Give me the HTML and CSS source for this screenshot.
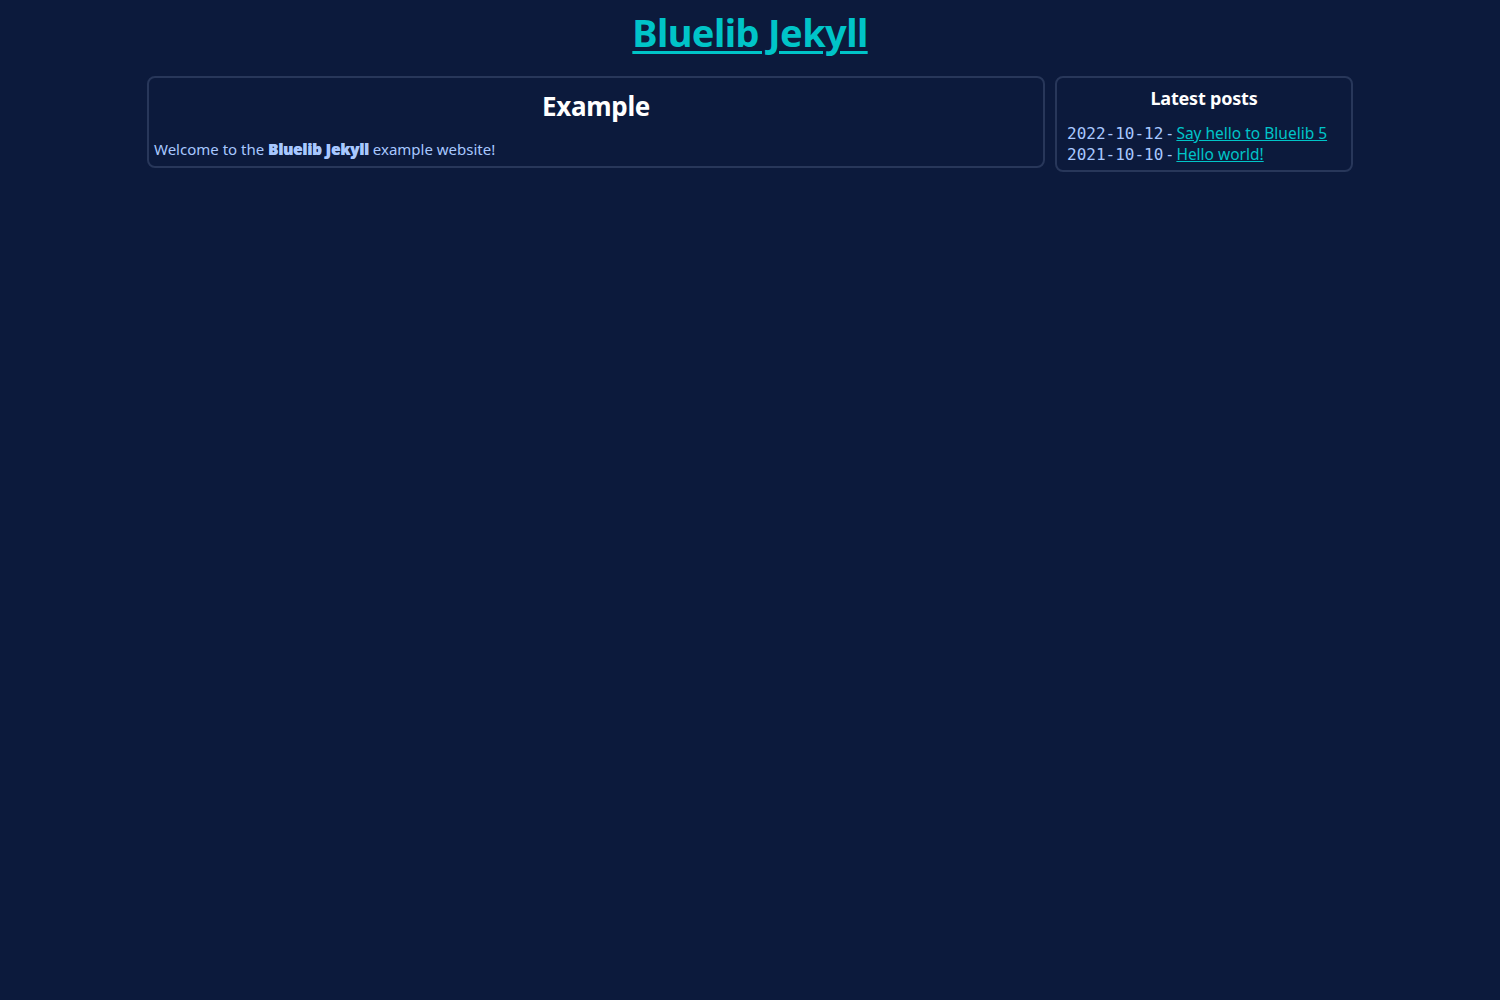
FILE: index.html
```html
<!DOCTYPE html>
<html>
<head>
<meta charset="utf-8">
<title>Bluelib Jekyll</title>
<link rel="stylesheet" href="styles.css">
</head>
<body>
<header class="site-header">
  <h1 class="site-title"><a href="#">Bluelib Jekyll</a></h1>
</header>
<div class="layout">
  <main class="panel main-panel">
    <h2 class="panel-title">Example</h2>
    <p class="intro">Welcome to the <b class="strong">Bluelib Jekyll</b> example website!</p>
  </main>
  <aside class="panel side-panel">
    <h3 class="side-title">Latest posts</h3>
    <ul class="posts">
      <li><span class="date">2022-10-12</span> - <a href="#">Say hello to Bluelib 5</a></li>
      <li><span class="date">2021-10-10</span> - <a href="#">Hello world!</a></li>
    </ul>
  </aside>
</div>
</body>
</html>
```

FILE: styles.css
```css
html, body {
  margin: 0;
  padding: 0;
}
body {
  background: #0c1a3c;
  color: #a8c8ff;
  font-family: "Noto Sans", "Open Sans", sans-serif;
  font-size: 16px;
  min-height: 1000px;
}
.site-header {
  text-align: center;
  padding-top: 6px;
}
.site-title {
  margin: 0;
  font-size: 38px;
  line-height: 52px;
  font-weight: 700;
  letter-spacing: -0.6px;
}
.site-title a {
  color: #00c4c8;
  text-decoration: underline;
  text-decoration-thickness: 3px;
  text-underline-offset: 4px;
}
.layout {
  display: flex;
  gap: 10px;
  width: 1206px;
  margin: 18px auto 0;
  align-items: flex-start;
}
.panel {
  border: 2px solid #28375a;
  border-radius: 8px;
  box-sizing: border-box;
}
.main-panel {
  width: 898px;
  padding: 6px 5px 7px;
}
.side-panel {
  width: 298px;
  padding: 8px 10px 5px;
}
.panel-title {
  margin: 4px 0 15px;
  text-align: center;
  color: #ffffff;
  font-size: 26px;
  line-height: 36px;
  font-weight: 700;
  letter-spacing: -0.3px;
}
.intro {
  margin: 0;
  font-size: 15px;
  line-height: 20px;
}
.strong {
  font-weight: 900;
  color: #a8c8ff;
  text-shadow: 0.5px 0 0 #a8c8ff;
}
.side-title {
  margin: 0 0 13px;
  text-align: center;
  color: #ffffff;
  font-size: 18px;
  line-height: 24px;
  font-weight: 700;
  letter-spacing: -0.2px;
}
.posts {
  list-style: none;
  margin: 0;
  padding: 0;
  font-size: 15.5px;
  line-height: 21px;
}
.date {
  font-family: "DejaVu Sans Mono", "Liberation Mono", monospace;
  font-size: 16px;
}
.posts a {
  color: #00c4c8;
  text-decoration: underline;
}
```
